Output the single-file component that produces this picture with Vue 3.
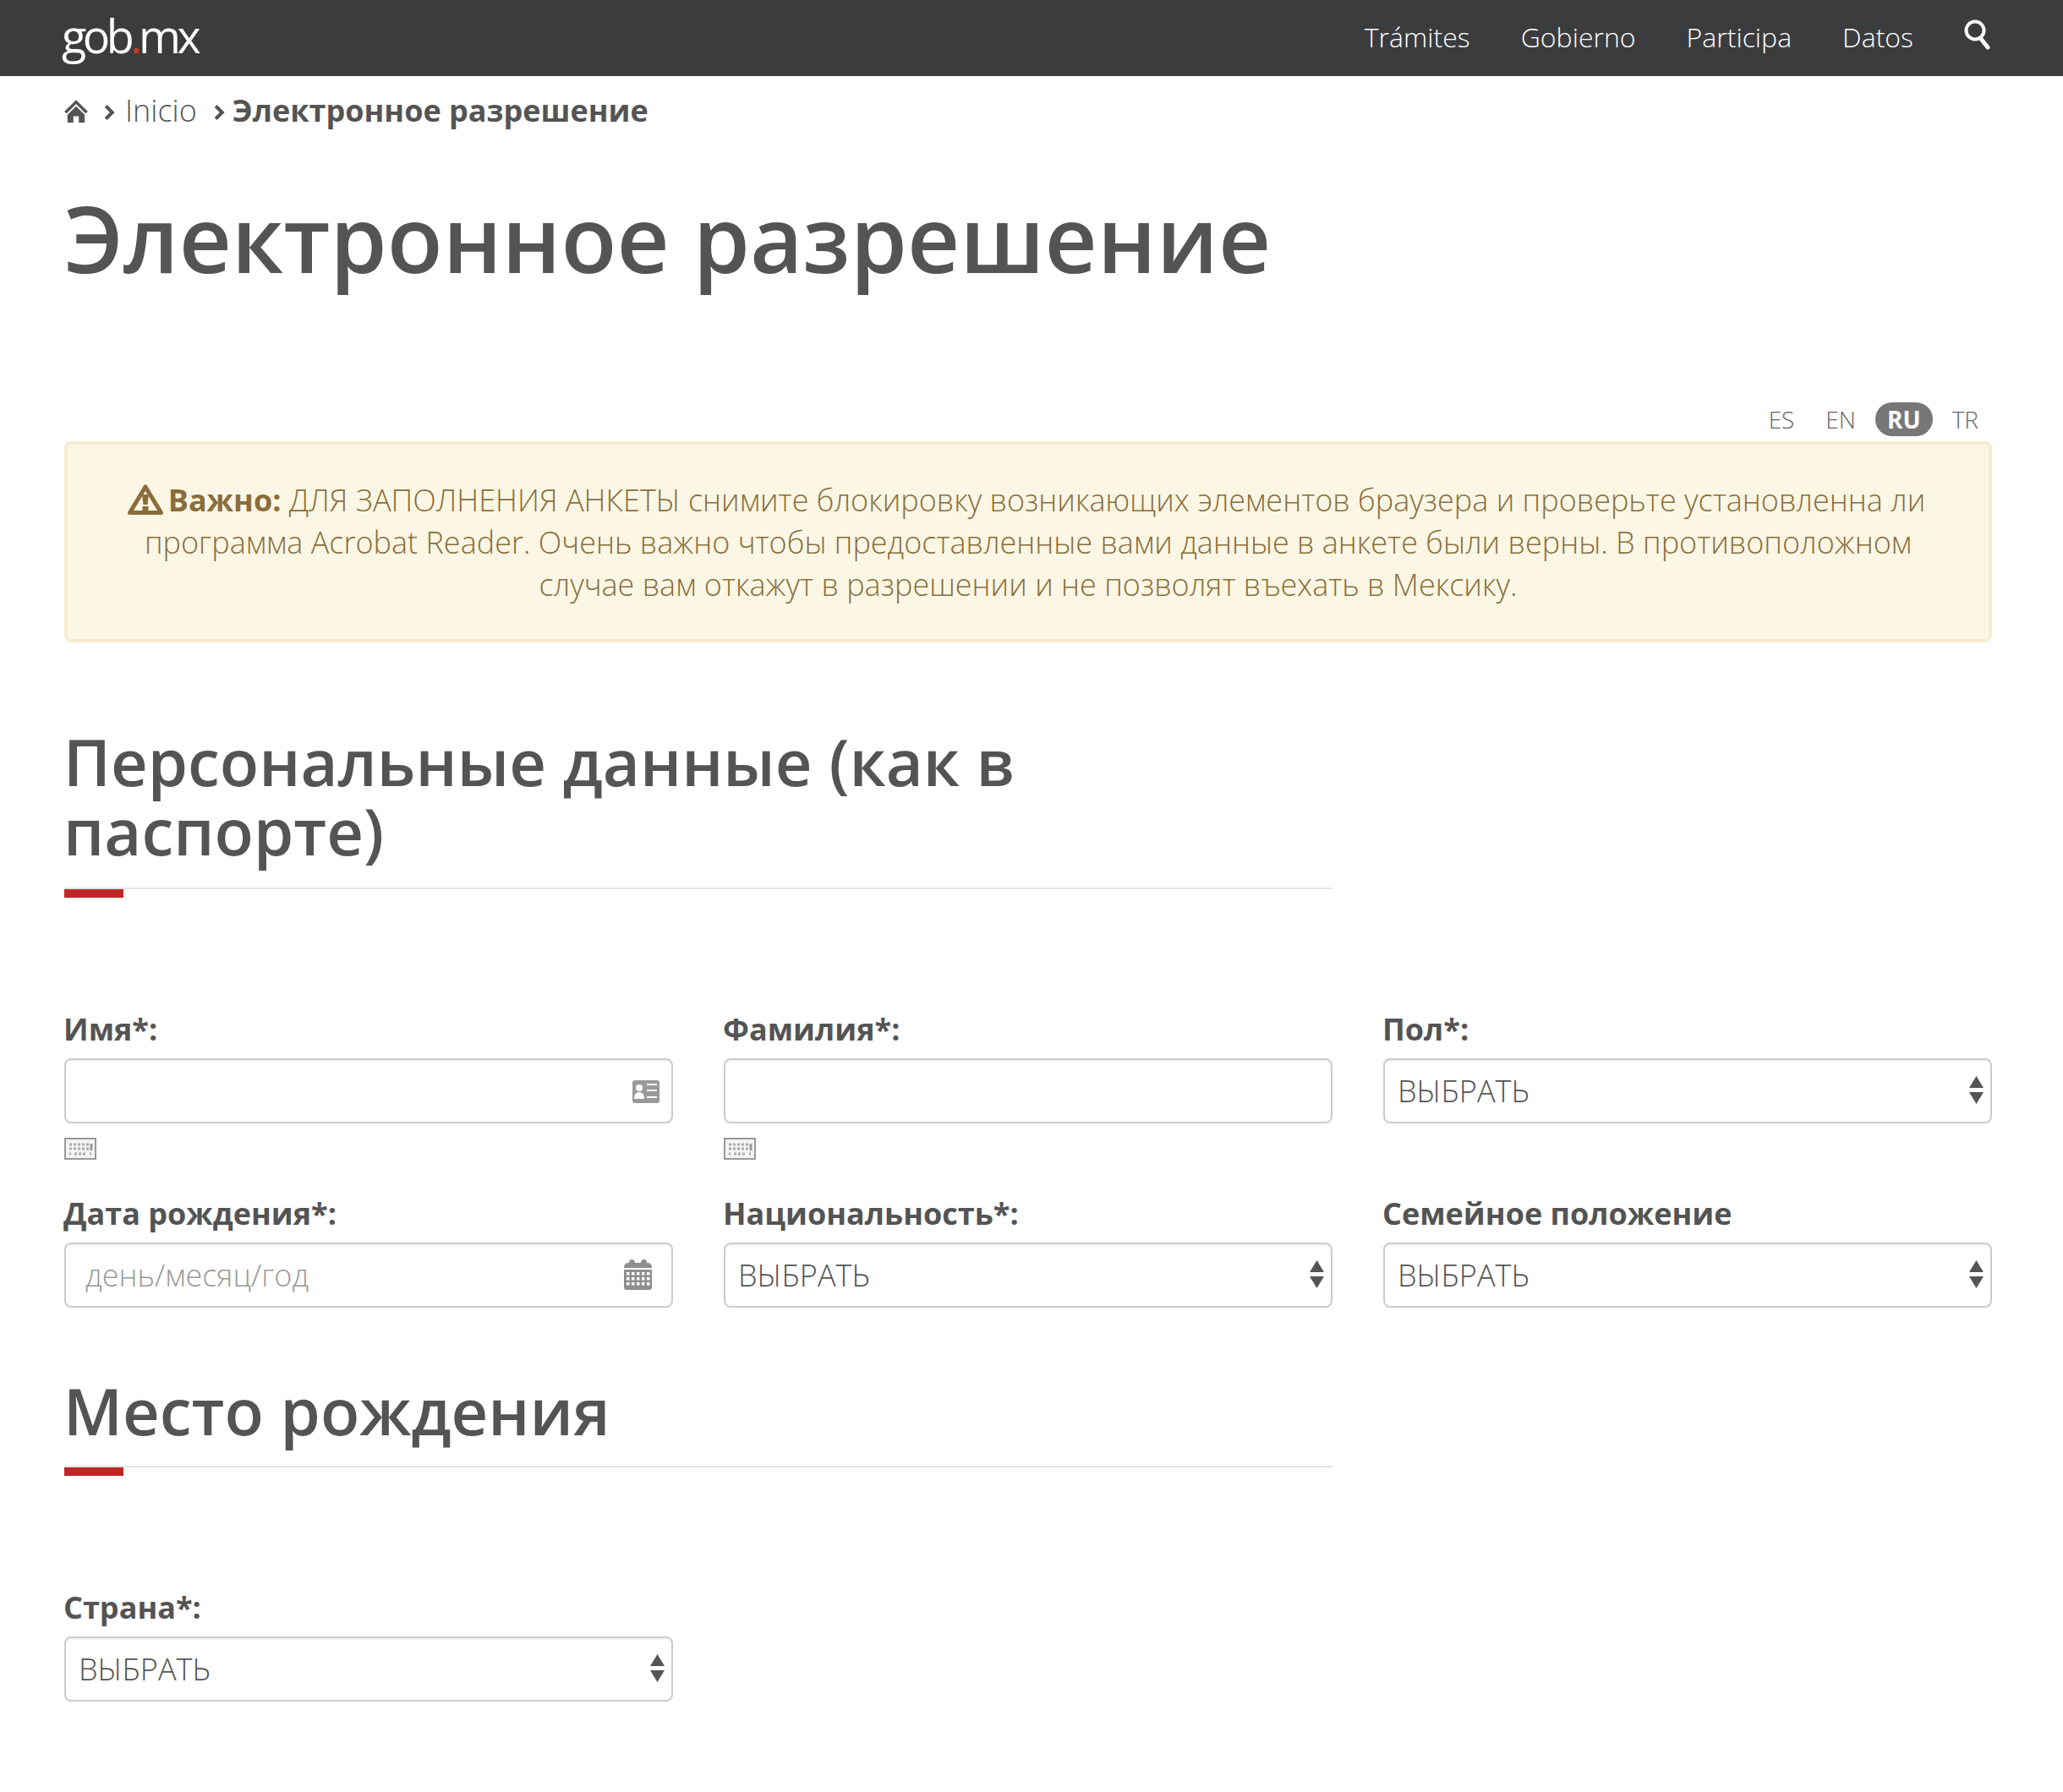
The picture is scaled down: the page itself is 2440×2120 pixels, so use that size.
<script setup>
const navLinks = ['Trámites', 'Gobierno', 'Participa', 'Datos']
const langs = ['ES', 'EN', 'RU', 'TR']
</script>

<template>
  <header class="navbar">
    <a class="logo">gob<span class="logo-dot">.</span>mx</a>
    <nav class="nav-links">
      <a v-for="link in navLinks" :key="link" class="nav-link">{{ link }}</a>
      <svg class="search-icon" viewBox="0 0 32 36" width="32" height="36">
        <circle cx="13" cy="13" r="10.5" fill="none" stroke="#fff" stroke-width="4" />
        <path d="M20 23 L28 33" stroke="#fff" stroke-width="5" stroke-linecap="round" />
      </svg>
    </nav>
  </header>

  <main class="page">
    <div class="breadcrumb">
      <svg class="home-icon" viewBox="0 0 28 28" width="30" height="30">
        <path d="M14 2 L1 15 L3.5 17 L14 6.5 L24.5 17 L27 15 Z" fill="#545454" />
        <path d="M14 9 L4.5 18.5 V27 H11 V20 H17 V27 H23.5 V18.5 Z" fill="#545454" />
      </svg>
      <svg class="chevron" viewBox="0 0 12 18" width="13" height="20">
        <path d="M2 2 L9 9 L2 16" fill="none" stroke="#545454" stroke-width="3.8" />
      </svg>
      <span class="crumb-link">Inicio</span>
      <svg class="chevron chevron-next" viewBox="0 0 12 18" width="13" height="20">
        <path d="M2 2 L9 9 L2 16" fill="none" stroke="#545454" stroke-width="3.8" />
      </svg>
      <strong class="crumb-current">Электронное разрешение</strong>
    </div>

    <h1 class="title">Электронное разрешение</h1>

    <div class="langs">
      <a v-for="lang in langs" :key="lang" class="lang" :class="{ active: lang === 'RU' }">{{ lang }}</a>
    </div>

    <div class="alert">
      <svg class="alert-icon" viewBox="0 0 42 36" width="42" height="36">
        <path d="M21 3 L39.500 33.500 H2.500 Z" fill="#fbf7e4" stroke="#8a6d3b" stroke-width="5" stroke-linejoin="round" />
        <path d="M17 12 H25 L23.500 24 H18.500 Z M17.500 26 H24.500 V31 H17.500 Z" fill="#8a6d3b" />
      </svg>
      <strong>Важно:</strong> ДЛЯ ЗАПОЛНЕНИЯ АНКЕТЫ снимите блокировку возникающих элементов браузера и проверьте установленна ли<br />
      программа Acrobat Reader. Очень важно чтобы предоставленные вами данные в анкете были верны. В противоположном<br />
      случае вам откажут в разрешении и не позволят въехать в Мексику.
    </div>

    <section class="section-head first">
      <h2>Персональные данные (как в паспорте)</h2>
      <div class="rule"><div class="rule-red"></div></div>
    </section>

    <div class="form-grid">
      <div class="field">
        <label>Имя*:</label>
        <div class="control">
          <input type="text" />
          <svg class="field-icon card" viewBox="0 0 32 27" width="32" height="27">
            <rect width="32" height="27" rx="3" fill="#999" />
            <circle cx="8" cy="9" r="4" fill="#fff" />
            <path d="M2 22 C2 16 5 14 8 14 C11 14 14 16 14 22 Z" fill="#fff" />
            <path d="M17 5 H29 M17 12 H29 M17 20 H29" stroke="#fff" stroke-width="2" />
          </svg>
        </div>
        <svg class="kbd" viewBox="0 0 38 26" width="38" height="26">
          <rect x="1" y="1" width="36" height="24" fill="#f4f4f4" stroke="#999" stroke-width="2" />
          <path d="M6 8 H29 M6 13 H31 M6 19 H8 M12 19 H26 M30 19 H32" stroke="#aaa" stroke-width="3" stroke-dasharray="3 2" />
          <path d="M32 7 V15" stroke="#999" stroke-width="3" />
        </svg>
      </div>
      <div class="field">
        <label>Фамилия*:</label>
        <div class="control"><input type="text" /></div>
        <svg class="kbd" viewBox="0 0 38 26" width="38" height="26">
          <rect x="1" y="1" width="36" height="24" fill="#f4f4f4" stroke="#999" stroke-width="2" />
          <path d="M6 8 H29 M6 13 H31 M6 19 H8 M12 19 H26 M30 19 H32" stroke="#aaa" stroke-width="3" stroke-dasharray="3 2" />
          <path d="M32 7 V15" stroke="#999" stroke-width="3" />
        </svg>
      </div>
      <div class="field">
        <label>Пол*:</label>
        <div class="control">
          <select><option>ВЫБРАТЬ</option></select>
          <svg class="field-icon arrows" viewBox="0 0 17 33" width="17" height="33">
            <path d="M8.5 0 L17 14 H0 Z M0 19 H17 L8.5 33 Z" fill="#555" />
          </svg>
        </div>
      </div>

      <div class="field">
        <label>Дата рождения*:</label>
        <div class="control">
          <input class="date" type="text" placeholder="день/месяц/год" />
          <svg class="field-icon calendar" viewBox="0 0 33 36" width="33" height="36">
            <path d="M0 10 Q0 5 4 4 H6 Q6 0 9.500 0 Q13 0 13 4 H20 Q20 0 23.500 0 Q27 0 27 4 H29 Q33 5 33 10 Z" fill="#8e8e8e" />
            <path d="M0 12 H33 V33 Q33 36 30 36 H3 Q0 36 0 33 Z" fill="#8e8e8e" />
            <g fill="#fff">
              <rect v-for="cell in 15" :key="cell" :x="3 + ((cell - 1) % 5) * 6" :y="15 + Math.floor((cell - 1) / 5) * 6" width="3.500" height="3.500" />
            </g>
          </svg>
        </div>
      </div>
      <div class="field">
        <label>Национальность*:</label>
        <div class="control">
          <select><option>ВЫБРАТЬ</option></select>
          <svg class="field-icon arrows" viewBox="0 0 17 33" width="17" height="33">
            <path d="M8.5 0 L17 14 H0 Z M0 19 H17 L8.5 33 Z" fill="#555" />
          </svg>
        </div>
      </div>
      <div class="field">
        <label>Семейное положение</label>
        <div class="control">
          <select><option>ВЫБРАТЬ</option></select>
          <svg class="field-icon arrows" viewBox="0 0 17 33" width="17" height="33">
            <path d="M8.5 0 L17 14 H0 Z M0 19 H17 L8.5 33 Z" fill="#555" />
          </svg>
        </div>
      </div>
    </div>

    <section class="section-head second">
      <h2>Место рождения</h2>
      <div class="rule"><div class="rule-red"></div></div>
    </section>

    <div class="form-grid country">
      <div class="field">
        <label>Страна*:</label>
        <div class="control">
          <select><option>ВЫБРАТЬ</option></select>
          <svg class="field-icon arrows" viewBox="0 0 17 33" width="17" height="33">
            <path d="M8.5 0 L17 14 H0 Z M0 19 H17 L8.5 33 Z" fill="#555" />
          </svg>
        </div>
      </div>
    </div>
  </main>
</template>

<style>
html, body {
  margin: 0;
  background: #fff;
}
</style>

<style scoped>
.navbar {
  height: 90px;
  background: #3b3c3e;
  display: flex;
  align-items: center;
  justify-content: space-between;
  padding: 0 85px 0 73px;
  font-family: "Open Sans", sans-serif;
  color: #fff;
}

.logo {
  font-size: 54px;
  letter-spacing: -4.5px;
  line-height: 90px;
  position: relative;
  top: -3px;
}

.logo-dot {
  color: #c0392b;
}

.nav-links {
  display: flex;
  align-items: center;
  gap: 60px;
  padding-bottom: 4px;
}

.nav-link {
  font-size: 32px;
  font-weight: 300;
}

.search-icon {
  position: relative;
  top: -2px;
}

.page {
  padding: 0 84px 107px 76px;
  font-family: "Open Sans", sans-serif;
  color: #545454;
}

.breadcrumb {
  height: 81px;
  display: flex;
  align-items: center;
  font-size: 36px;
}

.home-icon {
  margin-left: -1px;
}

.chevron {
  margin: 4px 12px 0 18px;
}

.chevron-next {
  margin: 4px 9px 0 20px;
}

.crumb-link {
  font-weight: 300;
}

.crumb-current {
  font-weight: 700;
}

.title {
  margin: 0;
  font-size: 108px;
  font-weight: 600;
  line-height: 150px;
  padding-top: 36px;
}

.langs {
  margin-top: 119px;
  height: 40px;
  display: flex;
  justify-content: flex-end;
  gap: 9px;
  margin-bottom: 6px;
  padding-right: 2px;
}

.lang {
  font-size: 28px;
  font-weight: 300;
  line-height: 40px;
  padding: 0 14px;
  color: #666;
}

.lang.active {
  background: #777;
  color: #fff;
  font-weight: 700;
  border-radius: 20px;
}

.alert {
  box-sizing: border-box;
  height: 238px;
  padding: 41px 40px 0;
  background: #fbf7e4;
  border: 4px solid #f7ecd1;
  border-radius: 8px;
  color: #8a6d3b;
  font-size: 36px;
  font-weight: 300;
  line-height: 50px;
  text-align: center;
}

.alert-icon {
  vertical-align: -4px;
  margin-right: 6px;
  margin-left: -4px;
}

.alert strong {
  font-weight: 700;
}

.section-head {
  width: 1500px;
}

.section-head h2 {
  margin: 0 0 0 -1px;
  font-size: 76px;
  font-weight: 600;
  line-height: 82px;
}

.section-head.first {
  margin-top: 100px;
}

.section-head.second {
  margin-top: 81px;
}

.rule {
  border-top: 2px solid #dfe3e3;
  margin-top: 26px;
}

.second .rule {
  margin-top: 24px;
}

.rule-red {
  width: 70px;
  height: 10px;
  background: #bf2727;
}

.form-grid {
  display: grid;
  grid-template-columns: repeat(3, 720px);
  column-gap: 60px;
  row-gap: 39px;
  margin-top: 131px;
}

.field {
  display: flex;
  flex-direction: column;
  align-items: flex-start;
}

.field label {
  font-size: 36px;
  font-weight: 700;
  line-height: 50px;
  margin: 0 0 9px -1px;
}

.control {
  position: relative;
  width: 100%;
}

input,
select {
  display: block;
  box-sizing: border-box;
  width: 100%;
  height: 77px;
  padding: 0 15px;
  border: 2px solid #ccc;
  border-radius: 8px;
  background: #fff;
  box-shadow: inset 0 2px 2px rgba(0, 0, 0, 0.05);
  font-family: "Open Sans", sans-serif;
  font-size: 36px;
  font-weight: 300;
  color: #545454;
  appearance: none;
  outline: none;
}

input.date {
  padding-left: 23px;
}

input::placeholder {
  color: #999;
  opacity: 1;
}

.field-icon {
  position: absolute;
  display: block;
}

.card {
  top: 26px;
  right: 16px;
}

.calendar {
  top: 20px;
  right: 25px;
}

.arrows {
  top: 21px;
  right: 10px;
}

.kbd {
  margin-top: 17px;
}
</style>
